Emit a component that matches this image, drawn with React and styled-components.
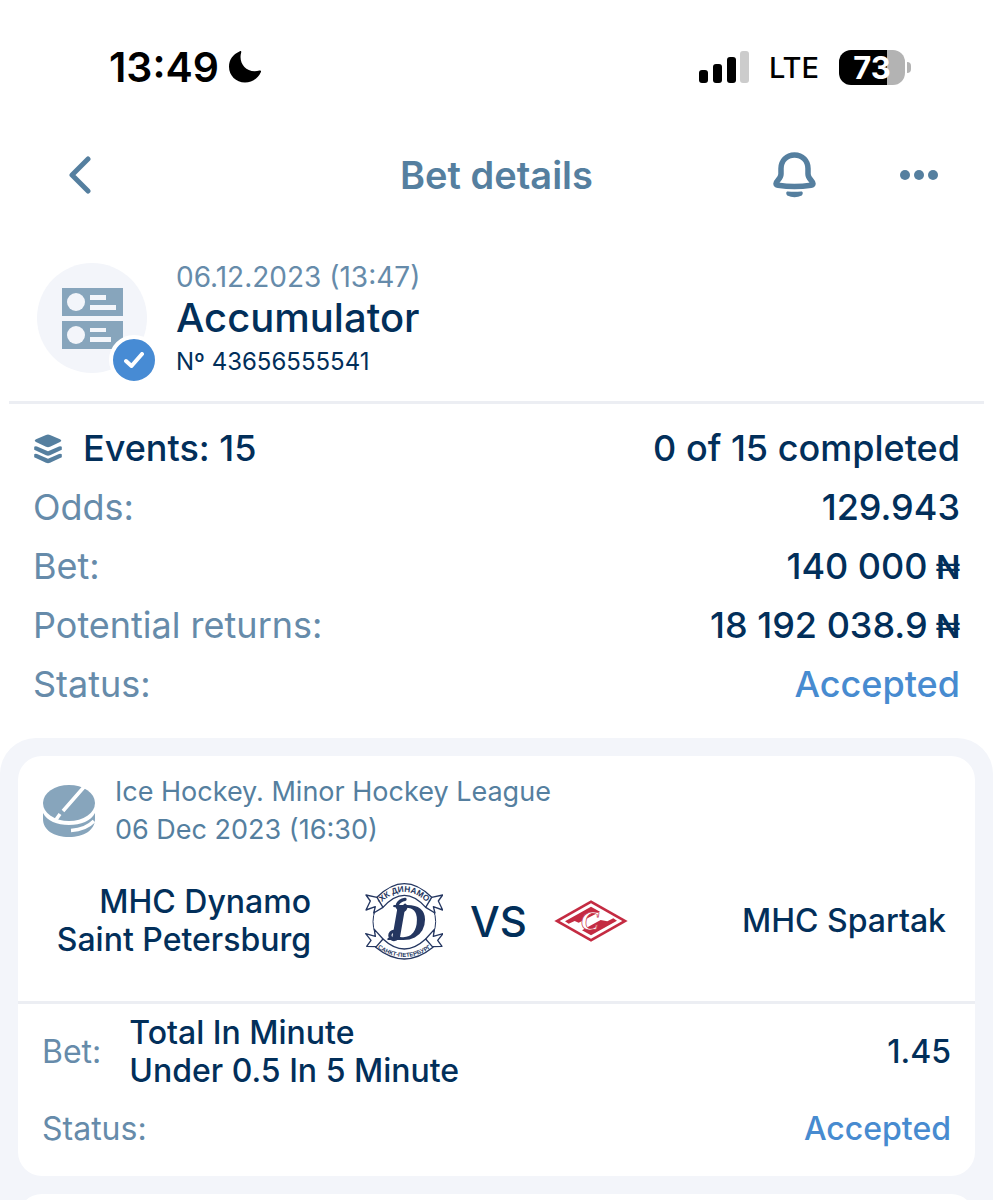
import React from 'react';
import styled, { createGlobalStyle } from 'styled-components';

const GlobalStyle = createGlobalStyle`
  * {
    box-sizing: border-box;
  }
  body {
    margin: 0;
    background: #fff;
    color: #022f5a;
    font-family: Inter, "Liberation Sans", sans-serif;
  }
  h1, h2, p, dl, dd, ul {
    margin: 0;
    padding: 0;
    font-weight: inherit;
  }
  svg {
    display: block;
    flex-shrink: 0;
  }
`;

const Page = styled.div`
  display: flex;
  flex-direction: column;
  height: 100vh;
`;

const StatusBar = styled.div`
  display: flex;
  align-items: center;
  justify-content: space-between;
  flex-shrink: 0;
  padding: 42px 82px 0 109px;
  height: 92px;
  color: #000;
`;

const Clock = styled.div`
  display: flex;
  align-items: center;
  gap: 9px;
  font-size: 41px;
  font-weight: 600;
`;

const Signals = styled.div`
  display: flex;
  align-items: center;
  gap: 20px;
`;

const Network = styled.span`
  font-size: 29px;
  font-weight: 500;
`;

const Battery = styled.div`
  display: flex;
  align-items: center;
  gap: 2px;

  &::after {
    content: '';
    width: 4px;
    height: 11px;
    border-radius: 0 5px 5px 0;
    background: #b3b3b3;
  }
`;

const Charge = styled.span`
  width: 66px;
  border-radius: 12px;
  background: linear-gradient(to right, #000 73%, #b3b3b3 73%);
  color: #fff;
  font-size: 31px;
  font-weight: 700;
  line-height: 35px;
  text-align: center;
`;

const NavBar = styled.header`
  display: grid;
  grid-template-columns: 1fr auto 1fr;
  align-items: center;
  flex-shrink: 0;
  height: 166px;
  padding: 0 55px 0 68px;
  color: #557f9f;
`;

const NavTitle = styled.h1`
  padding-right: 13px;
  font-size: 38px;
  font-weight: 600;
`;

const NavActions = styled.div`
  display: flex;
  justify-content: flex-end;
  gap: 83px;
`;

const IconButton = styled.button`
  display: flex;
  align-items: center;
  justify-self: start;
  padding: 0;
  border: 0;
  background: none;
  color: inherit;
  cursor: pointer;
`;

const Summary = styled.section`
  display: flex;
  gap: 29px;
  flex-shrink: 0;
  margin: 0 9px;
  padding: 5px 28px 0;
  height: 146px;
  border-bottom: 3px solid #eceef3;
`;

const Avatar = styled.div`
  position: relative;
  display: flex;
  align-items: center;
  justify-content: center;
  width: 110px;
  height: 110px;
  border-radius: 50%;
  background: #f3f5fa;
`;

const Badge = styled.span`
  position: absolute;
  right: -12px;
  bottom: -12px;
  display: flex;
  align-items: center;
  justify-content: center;
  width: 50px;
  height: 50px;
  border: 4px solid #fff;
  border-radius: 50%;
  background: #478bd4;
`;

const SummaryDate = styled.p`
  color: #668baa;
  font-size: 28px;
  line-height: 28px;
`;

const SummaryTitle = styled.h2`
  font-size: 40px;
  font-weight: 500;
  line-height: 54px;
`;

const SummaryNumber = styled.p`
  font-size: 24px;
  line-height: 34px;
`;

const Totals = styled.dl`
  flex-shrink: 0;
  padding: 15px 33px 24px;
`;

const TotalRow = styled.div`
  display: flex;
  justify-content: space-between;
  font-size: 36px;
  line-height: 59px;
`;

const Label = styled.dt`
  display: flex;
  align-items: center;
  gap: 20px;
  color: ${({ strong }) => (strong ? '#022f5a' : '#668baa')};
  font-weight: ${({ strong }) => (strong ? 500 : 400)};
`;

const Value = styled.dd`
  color: ${({ accent }) => (accent ? '#478bd0' : '#022f5a')};
  font-weight: 500;
`;

const Currency = styled.span`
  font-size: 32px;
  font-weight: 600;
  line-height: 1;
`;

const EventList = styled.ul`
  display: flex;
  flex-direction: column;
  flex: 1;
  gap: 18px;
  padding: 18px 18px 0;
  min-height: 0;
  overflow: hidden;
  border-radius: 36px 36px 0 0;
  background: #f3f5fa;
  list-style: none;
`;

const EventCard = styled.li`
  flex-shrink: 0;
  min-height: 60px;
  border-radius: 24px;
  background: #fff;
`;

const League = styled.div`
  display: flex;
  align-items: center;
  gap: 20px;
  padding: 17px 24px 0;
  color: #557f9f;
  font-size: 27px;
  line-height: 38px;
`;

const Match = styled.div`
  display: grid;
  grid-template-columns: 1fr auto 1fr;
  align-items: center;
  gap: 54px;
  height: 155px;
  padding: 0 29px 8px;
  border-bottom: 3px solid #eceef3;
`;

const Team = styled.p`
  font-size: 32px;
  font-weight: 500;
  line-height: 38px;
  text-align: right;
`;

const Crests = styled.div`
  display: flex;
  align-items: center;
  gap: 27px;
`;

const Versus = styled.span`
  font-size: 42px;
  font-weight: 500;
`;

const Pick = styled.dl`
  padding: 10px 24px 28px;
  font-size: 32px;
`;

const PickRow = styled.div`
  display: flex;
  align-items: center;
  gap: 28px;
  line-height: 38px;
  padding-bottom: ${({ spaced }) => (spaced ? '20px' : '0')};

  dd:last-child {
    margin-left: auto;
  }
`;

const MoonIcon = () => (
  <svg width="34" height="34" viewBox="0 0 34 34" aria-hidden="true">
    <path
      d="M11.5 1.5C12.5.6 13.6 1 13.2 2.4C10 13 18.500 24 31.500 20.500C32.900 20.100 33.400 21 32.800 22.200C29.800 28.700 23.900 32.500 17 32.500C8 32.500 1 25.500 1 16.700C1 9.800 5 4.200 11.500 1.500Z"
      fill="currentColor"
    />
  </svg>
);

const SignalIcon = () => (
  <svg width="50" height="32" viewBox="0 0 50 32" aria-hidden="true">
    <rect x="0" y="19" width="9" height="13" rx="3" />
    <rect x="14" y="13" width="9" height="19" rx="3" />
    <rect x="28" y="6" width="9" height="26" rx="3" />
    <rect x="41" y="0" width="9" height="32" rx="3" fill="#ccc" />
  </svg>
);

const BackIcon = () => (
  <svg width="24" height="38" viewBox="0 0 24 38" aria-hidden="true">
    <path
      d="M20 3 4 19 20 35"
      fill="none"
      stroke="currentColor"
      strokeWidth="5"
      strokeLinecap="round"
      strokeLinejoin="round"
    />
  </svg>
);

const BellIcon = () => (
  <svg width="44" height="46" viewBox="0 0 44 46" aria-hidden="true">
    <path
      d="M21.500 3C13.500 3 8 9 8 16.500V22C8 27 3 29 3 31.500C3 32.600 3.600 33 5 33.200Q21.500 35.600 38 33.200C39.400 33 40 32.600 40 31.500C40 29 35 27 35 22V16.500C35 9 29.500 3 21.500 3Z"
      fill="none"
      stroke="currentColor"
      strokeWidth="5.500"
      strokeLinejoin="round"
    />
    <path
      d="M15 39.500Q21.500 40 28 39.500C30 39.300 30.400 41.500 28.800 43.500Q21.500 47 14.200 43.500C12.600 41.500 13 39.300 15 39.500Z"
      fill="currentColor"
    />
  </svg>
);

const MoreIcon = () => (
  <svg width="38" height="10" viewBox="0 0 38 10" fill="currentColor" aria-hidden="true">
    <circle cx="5" cy="5" r="5" />
    <circle cx="19" cy="5" r="5" />
    <circle cx="33" cy="5" r="5" />
  </svg>
);

const CouponIcon = () => (
  <svg width="61" height="61" viewBox="0 0 61 61" aria-hidden="true">
    <path d="M0 0H61V28H0ZM0 33H61V61H0Z" fill="#87a5bc" />
    <g fill="#f3f5fa">
      <circle cx="14" cy="14" r="9" />
      <circle cx="14" cy="47" r="9" />
      <path d="M28 7H44V12H28ZM28 17H54V22H28ZM28 40H44V44H28ZM28 49H49V54H28Z" />
    </g>
  </svg>
);

const CheckIcon = () => (
  <svg width="20" height="16" viewBox="0 0 20 16" aria-hidden="true">
    <path
      d="M2 9 7.500 14 18 2"
      fill="none"
      stroke="#fff"
      strokeWidth="4"
      strokeLinecap="round"
      strokeLinejoin="round"
    />
  </svg>
);

const LayersIcon = () => (
  <svg width="30" height="30" viewBox="0 0 30 30" fill="#557f9f" aria-hidden="true">
    <path d="M13 1Q15 .2 17 1L27 5.200Q29.500 6.500 27 8L17 12.800Q15 13.500 13 12.800L3 8Q.5 6.500 3 5.200Z" />
    <path d="M1.200 12.800Q2.500 11.800 4 12.500L15 17.200 26 12.500Q27.500 11.800 28.800 12.800V15.800L17 21.300Q15 22.200 13 21.300L1.200 15.800Z" />
    <path d="M1.200 20.300Q2.500 19.300 4 20L15 24.700 26 20Q27.500 19.300 28.800 20.300V23.300L17 28.800Q15 29.700 13 28.800L1.200 23.300Z" />
  </svg>
);

const PuckIcon = () => (
  <svg width="53" height="53" viewBox="-1 0 53 53" aria-hidden="true">
    <ellipse cx="26" cy="18" rx="26" ry="18" fill="#87a5bc" />
    <path d="M0 28C4 36 14 40 26 40S48 36 52 28V34C52 45 41 52 26 52S0 45 0 34Z" fill="#87a5bc" />
    <g fill="none" stroke="#fff">
      <path d="M41 2 20 26M17 29 12 36" strokeWidth="3.500" />
      <path d="M28 45.500Q43 44.500 51 36" strokeWidth="3.500" />
    </g>
  </svg>
);

const DynamoCrest = () => (
  <svg width="78" height="78" viewBox="6 6 234 234" role="img" aria-label="Dynamo Saint Petersburg">
    <defs>
      <path id="crest-top" d="M44 78Q124 -6 204 78" />
      <path id="crest-bottom" d="M38 200Q124 262 210 200" />
    </defs>
    <circle cx="124" cy="125" r="94" fill="none" stroke="#243660" strokeWidth="3" />
    <g fill="#fff" stroke="#243660" strokeWidth="4" strokeLinejoin="round">
      <path d="M42 52 9 45 22 63 9 90 37 80 32 99 60 82M206 52 239 45 226 63 239 90 211 80 216 99 188 82" />
      <path d="M60 177 34 148 37 169 8 161 24 181 11 199 40 200M188 177 214 148 211 169 240 161 224 181 237 199 208 200" />
      <path d="M42 52Q124 -30 206 52L188 82Q124 10 60 82Z" />
      <path d="M60 177Q124 237 188 177L210 202Q124 272 38 202Z" />
    </g>
    <g fill="#243660" fontFamily="Liberation Sans, sans-serif" fontWeight="700" textAnchor="middle">
      <text fontSize="25">
        <textPath href="#crest-top" startOffset="50%">·ХК ДИНАМО·</textPath>
      </text>
      <text fontSize="18">
        <textPath href="#crest-bottom" startOffset="50%">САНКТ-ПЕТЕРБУРГ</textPath>
      </text>
    </g>
    <text x="132" y="180" fill="#243660" fontFamily="Liberation Serif, serif" fontSize="160" fontStyle="italic" fontWeight="700" textAnchor="middle">
      D
    </text>
    <g fill="none" stroke="#243660" strokeLinecap="round">
      <path d="M126 58C104 62 94 82 112 90C124 95 132 84 126 76" strokeWidth="10" />
      <path d="M106 172C88 188 74 168 84 158C92 150 104 156 100 166" strokeWidth="10" />
    </g>
  </svg>
);

const SpartakCrest = () => (
  <svg width="74" height="42" viewBox="0 0 222 126" role="img" aria-label="Spartak">
    <path d="M1 63 111 1 221 63 111 125Z" fill="#c42b42" />
    <path d="M17 63 111 10 205 63 111 116Z" fill="#fff" />
    <path d="M33 64 111 20 138 35 74 68 62 63 44 71Z" fill="#c42b42" />
    <path d="M189 62 111 106 84 91 140 60 160 64 178 55Z" fill="#c42b42" />
    <text x="108" y="89" fill="#fff" stroke="#c42b42" strokeWidth="2" fontFamily="Liberation Serif, serif" fontSize="80" fontStyle="italic" fontWeight="700" textAnchor="middle">
      С
    </text>
  </svg>
);

const totals = [
  { label: 'Odds:', value: '129.943' },
  { label: 'Bet:', value: '140 000', currency: '₦' },
  { label: 'Potential returns:', value: '18 192 038.9', currency: '₦' },
  { label: 'Status:', value: 'Accepted', accent: true },
];

const App = () => {
  return (
    <Page>
      <GlobalStyle />
      <StatusBar>
        <Clock>
          13:49
          <MoonIcon />
        </Clock>
        <Signals>
          <SignalIcon />
          <Network>LTE</Network>
          <Battery>
            <Charge>73</Charge>
          </Battery>
        </Signals>
      </StatusBar>

      <NavBar>
        <IconButton type="button" aria-label="Back">
          <BackIcon />
        </IconButton>
        <NavTitle>Bet details</NavTitle>
        <NavActions>
          <IconButton type="button" aria-label="Notifications">
            <BellIcon />
          </IconButton>
          <IconButton type="button" aria-label="More">
            <MoreIcon />
          </IconButton>
        </NavActions>
      </NavBar>

      <Summary>
        <Avatar>
          <CouponIcon />
          <Badge>
            <CheckIcon />
          </Badge>
        </Avatar>
        <div>
          <SummaryDate>06.12.2023 (13:47)</SummaryDate>
          <SummaryTitle>Accumulator</SummaryTitle>
          <SummaryNumber>Nº 43656555541</SummaryNumber>
        </div>
      </Summary>

      <Totals>
        <TotalRow>
          <Label strong="true">
            <LayersIcon />
            Events: 15
          </Label>
          <Value>0 of 15 completed</Value>
        </TotalRow>
        {totals.map(({ label, value, currency, accent }) => (
          <TotalRow key={label}>
            <Label>{label}</Label>
            <Value accent={accent ? 'true' : undefined}>
              {value}
              {currency && <Currency> {currency}</Currency>}
            </Value>
          </TotalRow>
        ))}
      </Totals>

      <EventList>
        <EventCard>
          <League>
            <PuckIcon />
            <div>
              <p>Ice Hockey. Minor Hockey League</p>
              <p>06 Dec 2023 (16:30)</p>
            </div>
          </League>
          <Match>
            <Team>
              MHC Dynamo
              <br />
              Saint Petersburg
            </Team>
            <Crests>
              <DynamoCrest />
              <Versus>VS</Versus>
              <SpartakCrest />
            </Crests>
            <Team>MHC Spartak</Team>
          </Match>
          <Pick>
            <PickRow spaced="true">
              <Label>Bet:</Label>
              <Value>
                Total In Minute
                <br />
                Under 0.5 In 5 Minute
              </Value>
              <Value>1.45</Value>
            </PickRow>
            <PickRow>
              <Label>Status:</Label>
              <Value accent="true">Accepted</Value>
            </PickRow>
          </Pick>
        </EventCard>
        <EventCard />
      </EventList>
    </Page>
  );
};

export default App;
